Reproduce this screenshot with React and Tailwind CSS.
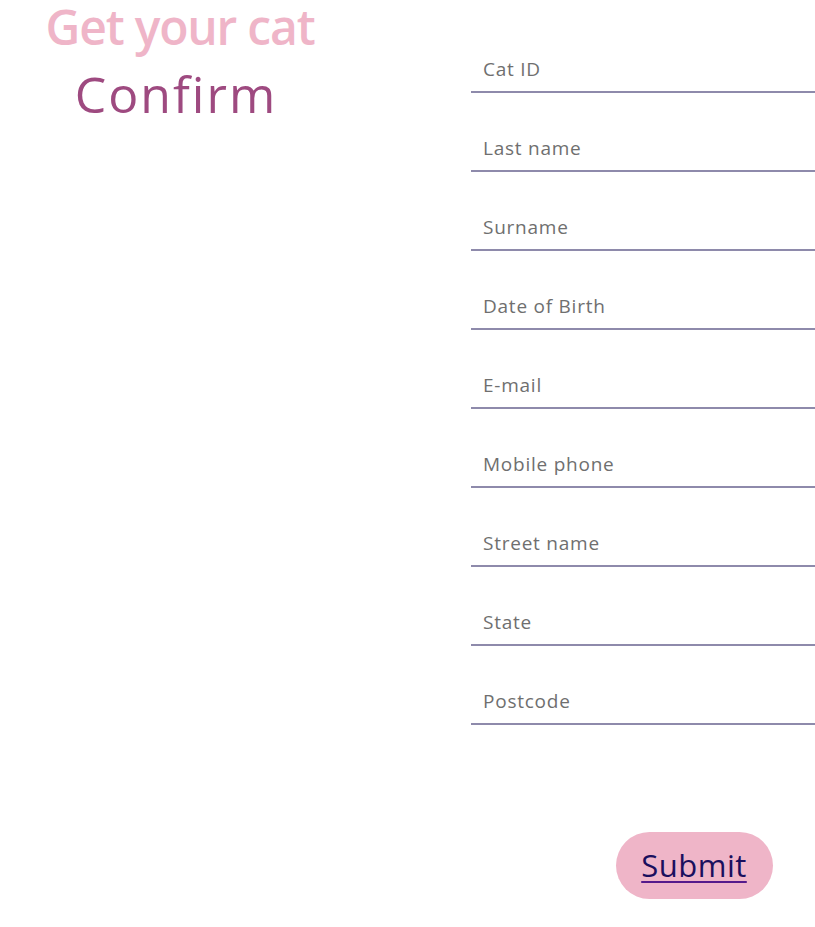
export default function App() {
  const fields = [
    'Cat ID',
    'Last name',
    'Surname',
    'Date of Birth',
    'E-mail',
    'Mobile phone',
    'Street name',
    'State',
    'Postcode',
  ];

  return (
    <div className="flex h-[927px] w-[815px] overflow-hidden bg-white font-['Open_Sans',sans-serif]">
      <div className="flex w-[360px] shrink-0 flex-col items-center pt-px">
        <h1 className="text-[48px] font-semibold leading-[52px] tracking-[-1.2px] text-[#efb5c8]">
          Get your cat
        </h1>
        <h2 className="mr-[8px] mt-[13px] text-[50px] font-medium leading-[56px] tracking-[2px] text-[#9e4a80]">
          Confirm
        </h2>
      </div>

      <div className="ml-[111px] flex w-[446px] shrink-0 flex-col">
        <div className="mt-[47px] flex flex-col gap-[33px]">
          {fields.map((f) => (
            <input
              key={f}
              type="text"
              placeholder={f}
              className="h-[46px] w-full border-b-2 border-[#8e8aab] bg-transparent px-3 text-[19px] tracking-[0.04em] text-[#555] outline-none placeholder:text-[#6f6f6f]"
            />
          ))}
        </div>
        <button
          type="button"
          className="mt-[107px] h-[67px] w-[157px] self-center rounded-full bg-[#efb5c8] text-[31px] tracking-[0.5px] text-[#1a0f5e] underline decoration-[#551a8b] decoration-2 underline-offset-4"
        >
          Submit
        </button>
      </div>
    </div>
  );
}
